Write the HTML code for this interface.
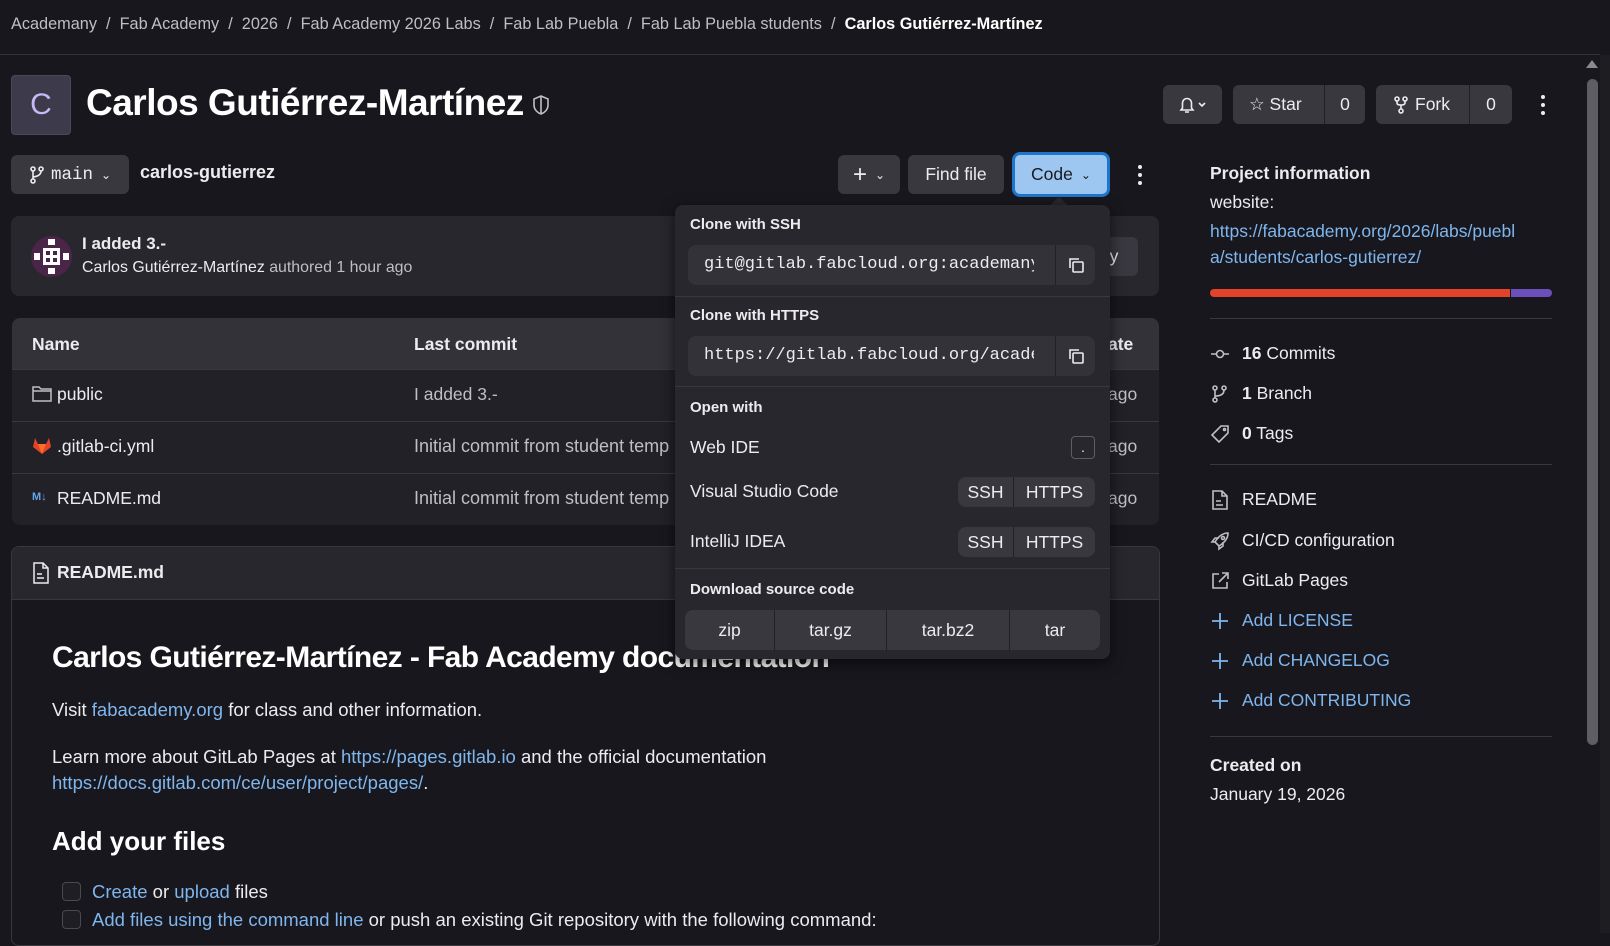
<!DOCTYPE html>
<html><head><meta charset="utf-8"><style>
*{box-sizing:border-box;margin:0;padding:0}
body{width:1610px;height:933px;overflow:hidden;background:#18171d;color:#ececef;font-family:"Liberation Sans",sans-serif;font-size:16.5px;position:relative}
.a{position:absolute}
.btn{position:absolute;background:#3a383f;border-radius:6px;color:#ececef;display:flex;align-items:center;justify-content:center;font-size:17.5px}
.lnk{color:#7fb6ee}
.sb{position:absolute;left:1210px;display:flex;align-items:center;gap:12px;font-size:17.5px;color:#ececef}
.sb svg{width:20px;height:20px}
.hr{position:absolute;left:1210px;width:342px;height:1px;background:#3a383f}
.row{position:absolute;left:12px;width:1147px;border-top:1px solid #3a383f;height:52px;background:#222127}
.dd{position:absolute;left:675px;top:205px;width:435px;height:454px;background:#28272d;border-radius:8px;box-shadow:0 4px 14px rgba(0,0,0,.6)}
.dt{position:absolute;left:15px;font-weight:bold;font-size:15px}
.inp{position:absolute;left:13px;width:407px;height:40px;background:#333238;border-radius:8px;overflow:hidden}
.inp span{position:absolute;left:16px;top:10px;font-family:"Liberation Mono",monospace;font-size:17px;white-space:nowrap;width:330px;overflow:hidden;color:#ececef}
.inp i{position:absolute;right:0;top:0;width:40px;height:40px;border-left:1px solid #222;display:flex;align-items:center;justify-content:center}
.sep{position:absolute;left:0;width:435px;height:1px;background:#3a383f}
.pair{position:absolute;left:283px;width:137px;height:30px;background:#3a383f;border-radius:8px;display:flex;font-size:17.5px}
.pair div{display:flex;align-items:center;justify-content:center}
.rm{font-size:18.5px}
</style></head><body>
<div class="a" style="left:11px;top:15px;font-size:16.3px;color:#bfbfc3;white-space:nowrap">Academany &nbsp;/&nbsp; Fab Academy &nbsp;/&nbsp; 2026 &nbsp;/&nbsp; Fab Academy 2026 Labs &nbsp;/&nbsp; Fab Lab Puebla &nbsp;/&nbsp; Fab Lab Puebla students &nbsp;/&nbsp; <b style="color:#fff">Carlos Gutiérrez-Martínez</b></div>
<div class="a" style="left:0;top:54px;width:1600px;height:1px;background:#333238"></div>
<div class="a" style="left:1600px;top:55px;width:10px;height:878px;background:#1e1d22"></div>
<div class="a" style="left:1587px;top:79px;width:11px;height:666px;background:#5e5d63;border-radius:6px"></div>
<div class="a" style="left:1586px;top:60px;width:0;height:0;border-left:6px solid transparent;border-right:6px solid transparent;border-bottom:8px solid #8a898f"></div>
<div class="a" style="left:11px;top:75px;width:60px;height:60px;background:#3d3a4c;border-radius:4px;border:1px solid #4a4758;color:#c7b9f2;font-size:30px;display:flex;align-items:center;justify-content:center">C</div>
<div class="a" style="left:86px;top:82px;font-size:37px;font-weight:bold;color:#fff;letter-spacing:-0.5px">Carlos Gutiérrez-Martínez</div>
<svg class="a" style="left:531px;top:94px" width="20" height="22" viewBox="0 0 20 22" fill="none" stroke="#bfbfc3" stroke-width="1.6"><path d="M10 2 L17 5 V11 C17 16 13 19 10 20 C7 19 3 16 3 11 V5 Z M10 2 V20"/></svg>
<div class="btn" style="left:1163px;top:85px;width:59px;height:39px"><svg width="30" height="20" viewBox="0 0 30 20" fill="none" stroke="#ececef" stroke-width="1.6"><path d="M3 15 H15 L13.5 13 V8 A4.5 4.5 0 0 0 4.5 8 V13 Z M7 17 H11"/><path d="M21 8 L24 11 L27 8"/></svg></div>
<div class="btn" style="left:1233px;top:85px;width:132px;height:39px;justify-content:flex-start"><span style="padding-left:16px">☆ Star</span><span style="position:absolute;left:91px;top:0;height:39px;border-left:1px solid #222;width:41px;display:flex;align-items:center;justify-content:center">0</span></div>
<div class="btn" style="left:1376px;top:85px;width:136px;height:39px;justify-content:flex-start"><svg style="margin-left:17px" width="16" height="20" viewBox="0 0 16 20" fill="none" stroke="#ececef" stroke-width="1.6"><circle cx="4" cy="4" r="2"/><circle cx="12" cy="4" r="2"/><circle cx="8" cy="16" r="2"/><path d="M4 6 V8 Q4 10 8 10 Q12 10 12 8 V6 M8 10 V14"/></svg><span style="margin-left:6px">Fork</span><span style="position:absolute;left:93px;top:0;height:39px;border-left:1px solid #222;width:43px;display:flex;align-items:center;justify-content:center">0</span></div>
<div class="a" style="left:1540px;top:95px;width:5px;height:20px;display:flex;flex-direction:column;justify-content:space-between;align-items:center"><i style="width:4px;height:4px;border-radius:50%;background:#ececef"></i><i style="width:4px;height:4px;border-radius:50%;background:#ececef"></i><i style="width:4px;height:4px;border-radius:50%;background:#ececef"></i></div>
<div class="btn" style="left:11px;top:155px;width:118px;height:39px"><svg width="16" height="20" viewBox="0 0 16 20" fill="none" stroke="#ececef" stroke-width="1.6"><circle cx="4" cy="4" r="2"/><circle cx="12" cy="4" r="2"/><circle cx="4" cy="16" r="2"/><path d="M4 6 V14 M12 6 Q12 11 4 12"/></svg><span style="font-family:'Liberation Mono',monospace;margin:0 8px 0 6px">main</span><span style="font-size:12px">⌄</span></div>
<div class="a" style="left:140px;top:162px;font-size:18px;font-weight:bold">carlos-gutierrez</div>
<div class="btn" style="left:838px;top:155px;width:62px;height:39px;font-size:24px">+<span style="font-size:12px;margin-left:8px">⌄</span></div>
<div class="btn" style="left:908px;top:155px;width:96px;height:39px">Find file</div>
<div class="btn" style="left:1012px;top:152px;width:98px;height:45px;background:#9dc7f1;color:#1a1a1f;border:3px solid #1f75cb;border-radius:8px">Code<span style="font-size:12px;margin-left:8px">⌄</span></div>
<div class="a" style="left:1138px;top:165px;width:5px;height:20px;display:flex;flex-direction:column;justify-content:space-between"><i style="width:4px;height:4px;border-radius:50%;background:#ececef"></i><i style="width:4px;height:4px;border-radius:50%;background:#ececef"></i><i style="width:4px;height:4px;border-radius:50%;background:#ececef"></i></div>
<div class="a" style="left:11px;top:216px;width:1148px;height:80px;background:#28272d;border-radius:8px"></div>
<div class="a" style="left:31px;top:236px;width:41px;height:41px;border-radius:50%;background:#4a2548;overflow:hidden"><svg width="41" height="41" viewBox="0 0 41 41"><g fill="#fff"><rect x="12" y="12" width="17" height="17"/><rect x="3" y="17" width="6" height="7"/><rect x="32" y="17" width="6" height="7"/><rect x="17" y="3" width="7" height="6"/><rect x="17" y="32" width="7" height="6"/></g><g fill="#4a2548"><rect x="15" y="15" width="4" height="4"/><rect x="22" y="15" width="4" height="4"/><rect x="15" y="22" width="4" height="4"/><rect x="22" y="22" width="4" height="4"/></g></svg></div>
<div class="a" style="left:82px;top:234px;font-size:17px;font-weight:bold">I added 3.-</div>
<div class="a" style="left:82px;top:259px;font-size:15.9px;color:#bfbfc3"><span style="color:#ececef">Carlos Gutiérrez-Martínez</span> authored 1 hour ago</div>
<div class="btn" style="left:1090px;top:237px;width:48px;height:39px">y</div>
<div class="a" style="left:12px;top:318px;width:1147px;height:207px;border-radius:8px;overflow:hidden;background:#222127">
<div style="height:51px;background:#333238"></div></div>
<div class="a" style="left:32px;top:334px;font-weight:bold;font-size:17.5px">Name</div>
<div class="a" style="left:414px;top:334px;font-weight:bold;font-size:17.5px">Last commit</div>
<div class="a" style="left:1108px;top:334px;font-weight:bold;font-size:17.5px">ate</div>
<div class="row" style="top:369px"></div><div class="row" style="top:421px"></div><div class="row" style="top:473px;height:52px;border-radius:0 0 8px 8px"></div>
<svg class="a" style="left:32px;top:385px" width="20" height="18" viewBox="0 0 20 18" fill="none" stroke="#bfbfc3" stroke-width="1.5"><path d="M1 2 H7 L9 4 H19 V16 H1 Z M1 6 H19"/></svg>
<div class="a" style="left:57px;top:384px;font-size:17.5px">public</div>
<div class="a" style="left:414px;top:384px;font-size:17.5px;color:#bfbfc3">I added 3.-</div>
<svg class="a" style="left:32px;top:436px" width="20" height="20" viewBox="0 0 20 20"><path d="M10 18 L1 11 L3 2 L6 8 H14 L17 2 L19 11 Z" fill="#e24329"/><path d="M10 18 L6 8 H14 Z" fill="#fc6d26"/></svg>
<div class="a" style="left:57px;top:436px;font-size:17.5px">.gitlab-ci.yml</div>
<div class="a" style="left:414px;top:436px;font-size:18px;color:#bfbfc3">Initial commit from student temp</div>
<div class="a" style="left:32px;top:491px;font-size:11px;font-weight:bold;color:#63a6e9">M↓</div>
<div class="a" style="left:57px;top:488px;font-size:17.5px">README.md</div>
<div class="a" style="left:414px;top:488px;font-size:18px;color:#bfbfc3">Initial commit from student temp</div>
<div class="a" style="left:1108px;top:384px;font-size:17.5px;color:#bfbfc3">ago</div>
<div class="a" style="left:1108px;top:436px;font-size:17.5px;color:#bfbfc3">ago</div>
<div class="a" style="left:1108px;top:488px;font-size:17.5px;color:#bfbfc3">ago</div>
<div class="a" style="left:11px;top:546px;width:1149px;height:400px;border:1px solid #3a383f;border-radius:8px;background:#18171d;overflow:hidden"><div style="height:53px;background:#28272d;border-bottom:1px solid #3a383f"></div></div>
<svg class="a" style="left:33px;top:562px" width="16" height="22" viewBox="0 0 16 22" fill="none" stroke="#ececef" stroke-width="1.5"><path d="M1 1 H10 L15 6 V21 H1 Z M10 1 V6 H15 M4 12 H9 M4 16 H11"/></svg>
<div class="a" style="left:57px;top:562px;font-weight:bold;font-size:17.5px">README.md</div>
<div class="a" style="left:52px;top:641px;font-weight:bold;font-size:30px;letter-spacing:-0.6px;color:#fff">Carlos Gutiérrez-Martínez - Fab Academy documentation</div>
<div class="a rm" style="left:52px;top:699px">Visit <span class="lnk">fabacademy.org</span> for class and other information.</div>
<div class="a rm" style="left:52px;top:744px;line-height:26px">Learn more about GitLab Pages at <span class="lnk">https://pages.gitlab.io</span> and the official documentation<br><span class="lnk">https://docs.gitlab.com/ce/user/project/pages/</span>.</div>
<div class="a" style="left:52px;top:826px;font-weight:bold;font-size:26px;color:#fff">Add your files</div>
<div class="a" style="left:62px;top:882px;width:19px;height:19px;border:1px solid #4a4950;border-radius:4px;background:#1f1e24"></div>
<div class="a rm" style="left:92px;top:881px"><span class="lnk">Create</span> or <span class="lnk">upload</span> files</div>
<div class="a" style="left:62px;top:910px;width:19px;height:19px;border:1px solid #4a4950;border-radius:4px;background:#1f1e24"></div>
<div class="a rm" style="left:92px;top:909px"><span class="lnk">Add files using the command line</span> or push an existing Git repository with the following command:</div>
<div class="a" style="left:1210px;top:163px;font-weight:bold;font-size:17.5px">Project information</div>
<div class="a" style="left:1210px;top:192px;font-size:17.5px">website:</div>
<div class="a lnk" style="left:1210px;top:218px;font-size:17.5px;line-height:26px">https://fabacademy.org/2026/labs/puebl<br>a/students/carlos-gutierrez/</div>
<div class="a" style="left:1210px;top:289px;width:300px;height:8px;background:#e24329;border-radius:4px 0 0 4px"></div>
<div class="a" style="left:1511px;top:289px;width:41px;height:8px;background:#6b4fbb;border-radius:0 4px 4px 0"></div>
<div class="hr" style="top:318px"></div>
<div class="sb" style="top:343px"><svg viewBox="0 0 20 20" fill="none" stroke="#bfbfc3" stroke-width="1.6"><circle cx="10" cy="10" r="3.5"/><path d="M1 10 H6.5 M13.5 10 H19"/></svg><span><b>16</b> Commits</span></div>
<div class="sb" style="top:383px"><svg viewBox="0 0 20 20" fill="none" stroke="#bfbfc3" stroke-width="1.6"><circle cx="5" cy="4" r="2"/><circle cx="14" cy="4" r="2"/><circle cx="5" cy="16" r="2"/><path d="M5 6 V14 M14 6 Q14 12 5 12"/></svg><span><b>1</b> Branch</span></div>
<div class="sb" style="top:423px"><svg viewBox="0 0 20 20" fill="none" stroke="#bfbfc3" stroke-width="1.6"><path d="M11 2 H18 V9 L9 18 L2 11 Z"/><circle cx="14.5" cy="5.5" r="1"/></svg><span><b>0</b> Tags</span></div>
<div class="hr" style="top:464px"></div>
<div class="sb" style="top:489px"><svg viewBox="0 0 20 20" fill="none" stroke="#bfbfc3" stroke-width="1.6"><path d="M3 1 H12 L17 6 V19 H3 Z M12 1 V6 H17 M6 11 H11 M6 15 H13"/></svg><span>README</span></div>
<div class="sb" style="top:530px"><svg viewBox="0 0 20 20" fill="none" stroke="#bfbfc3" stroke-width="1.6"><path d="M18 2 C12 2 8 6 5 11 L9 15 C14 12 18 8 18 2 Z M5 11 L2 11 L5 7 H9 M9 15 V18 L13 15 V11"/><circle cx="13" cy="7" r="1.5"/></svg><span>CI/CD configuration</span></div>
<div class="sb" style="top:570px"><svg viewBox="0 0 20 20" fill="none" stroke="#bfbfc3" stroke-width="1.6"><path d="M9 3 H3 V17 H17 V11 M12 2 H18 V8 M18 2 L9 11"/></svg><span>GitLab Pages</span></div>
<div class="sb lnk" style="top:610px;color:#7fb6ee"><svg viewBox="0 0 20 20" stroke="#7fb6ee" stroke-width="1.8"><path d="M10 2 V18 M2 10 H18"/></svg><span>Add LICENSE</span></div>
<div class="sb lnk" style="top:650px;color:#7fb6ee"><svg viewBox="0 0 20 20" stroke="#7fb6ee" stroke-width="1.8"><path d="M10 2 V18 M2 10 H18"/></svg><span>Add CHANGELOG</span></div>
<div class="sb lnk" style="top:690px;color:#7fb6ee"><svg viewBox="0 0 20 20" stroke="#7fb6ee" stroke-width="1.8"><path d="M10 2 V18 M2 10 H18"/></svg><span>Add CONTRIBUTING</span></div>
<div class="hr" style="top:736px"></div>
<div class="a" style="left:1210px;top:755px;font-weight:bold;font-size:17.5px">Created on</div>
<div class="a" style="left:1210px;top:784px;font-size:17.5px">January 19, 2026</div>
<div class="a" style="left:1053px;top:199px;width:12px;height:12px;background:#28272d;transform:rotate(45deg)"></div>
<div class="dd">
<div class="dt" style="top:11px">Clone with SSH</div>
<div class="inp" style="top:40px"><span>git@gitlab.fabcloud.org:academany</span><i><svg width="18" height="18" viewBox="0 0 18 18" fill="none" stroke="#ececef" stroke-width="1.6"><rect x="6" y="6" width="10" height="10" rx="1"/><path d="M3 12 V3 H12"/></svg></i></div>
<div class="sep" style="top:91px"></div>
<div class="dt" style="top:102px">Clone with HTTPS</div>
<div class="inp" style="top:131px"><span>https://gitlab.fabcloud.org/academany</span><i><svg width="18" height="18" viewBox="0 0 18 18" fill="none" stroke="#ececef" stroke-width="1.6"><rect x="6" y="6" width="10" height="10" rx="1"/><path d="M3 12 V3 H12"/></svg></i></div>
<div class="sep" style="top:181px"></div>
<div class="dt" style="top:194px">Open with</div>
<div class="a" style="left:15px;top:232px;font-size:17.5px">Web IDE</div>
<div class="a" style="left:396px;top:231px;width:24px;height:23px;border:1px solid #5e5d63;border-radius:4px;text-align:center;font-size:14px;line-height:20px">.</div>
<div class="a" style="left:15px;top:276px;font-size:17.5px">Visual Studio Code</div>
<div class="pair" style="top:272px"><div style="width:56px;border-right:1px solid #222">SSH</div><div style="flex:1">HTTPS</div></div>
<div class="a" style="left:15px;top:326px;font-size:17.5px">IntelliJ IDEA</div>
<div class="pair" style="top:322px"><div style="width:56px;border-right:1px solid #222">SSH</div><div style="flex:1">HTTPS</div></div>
<div class="sep" style="top:363px"></div>
<div class="dt" style="top:376px">Download source code</div>
<div class="a" style="left:10px;top:405px;width:415px;height:40px;background:#3a383f;border-radius:8px;display:flex;font-size:17.5px">
<div style="width:90px;border-right:1px solid #222;display:flex;align-items:center;justify-content:center">zip</div>
<div style="width:112px;border-right:1px solid #222;display:flex;align-items:center;justify-content:center">tar.gz</div>
<div style="width:123px;border-right:1px solid #222;display:flex;align-items:center;justify-content:center">tar.bz2</div>
<div style="flex:1;display:flex;align-items:center;justify-content:center">tar</div></div>
</div>
</body></html>
